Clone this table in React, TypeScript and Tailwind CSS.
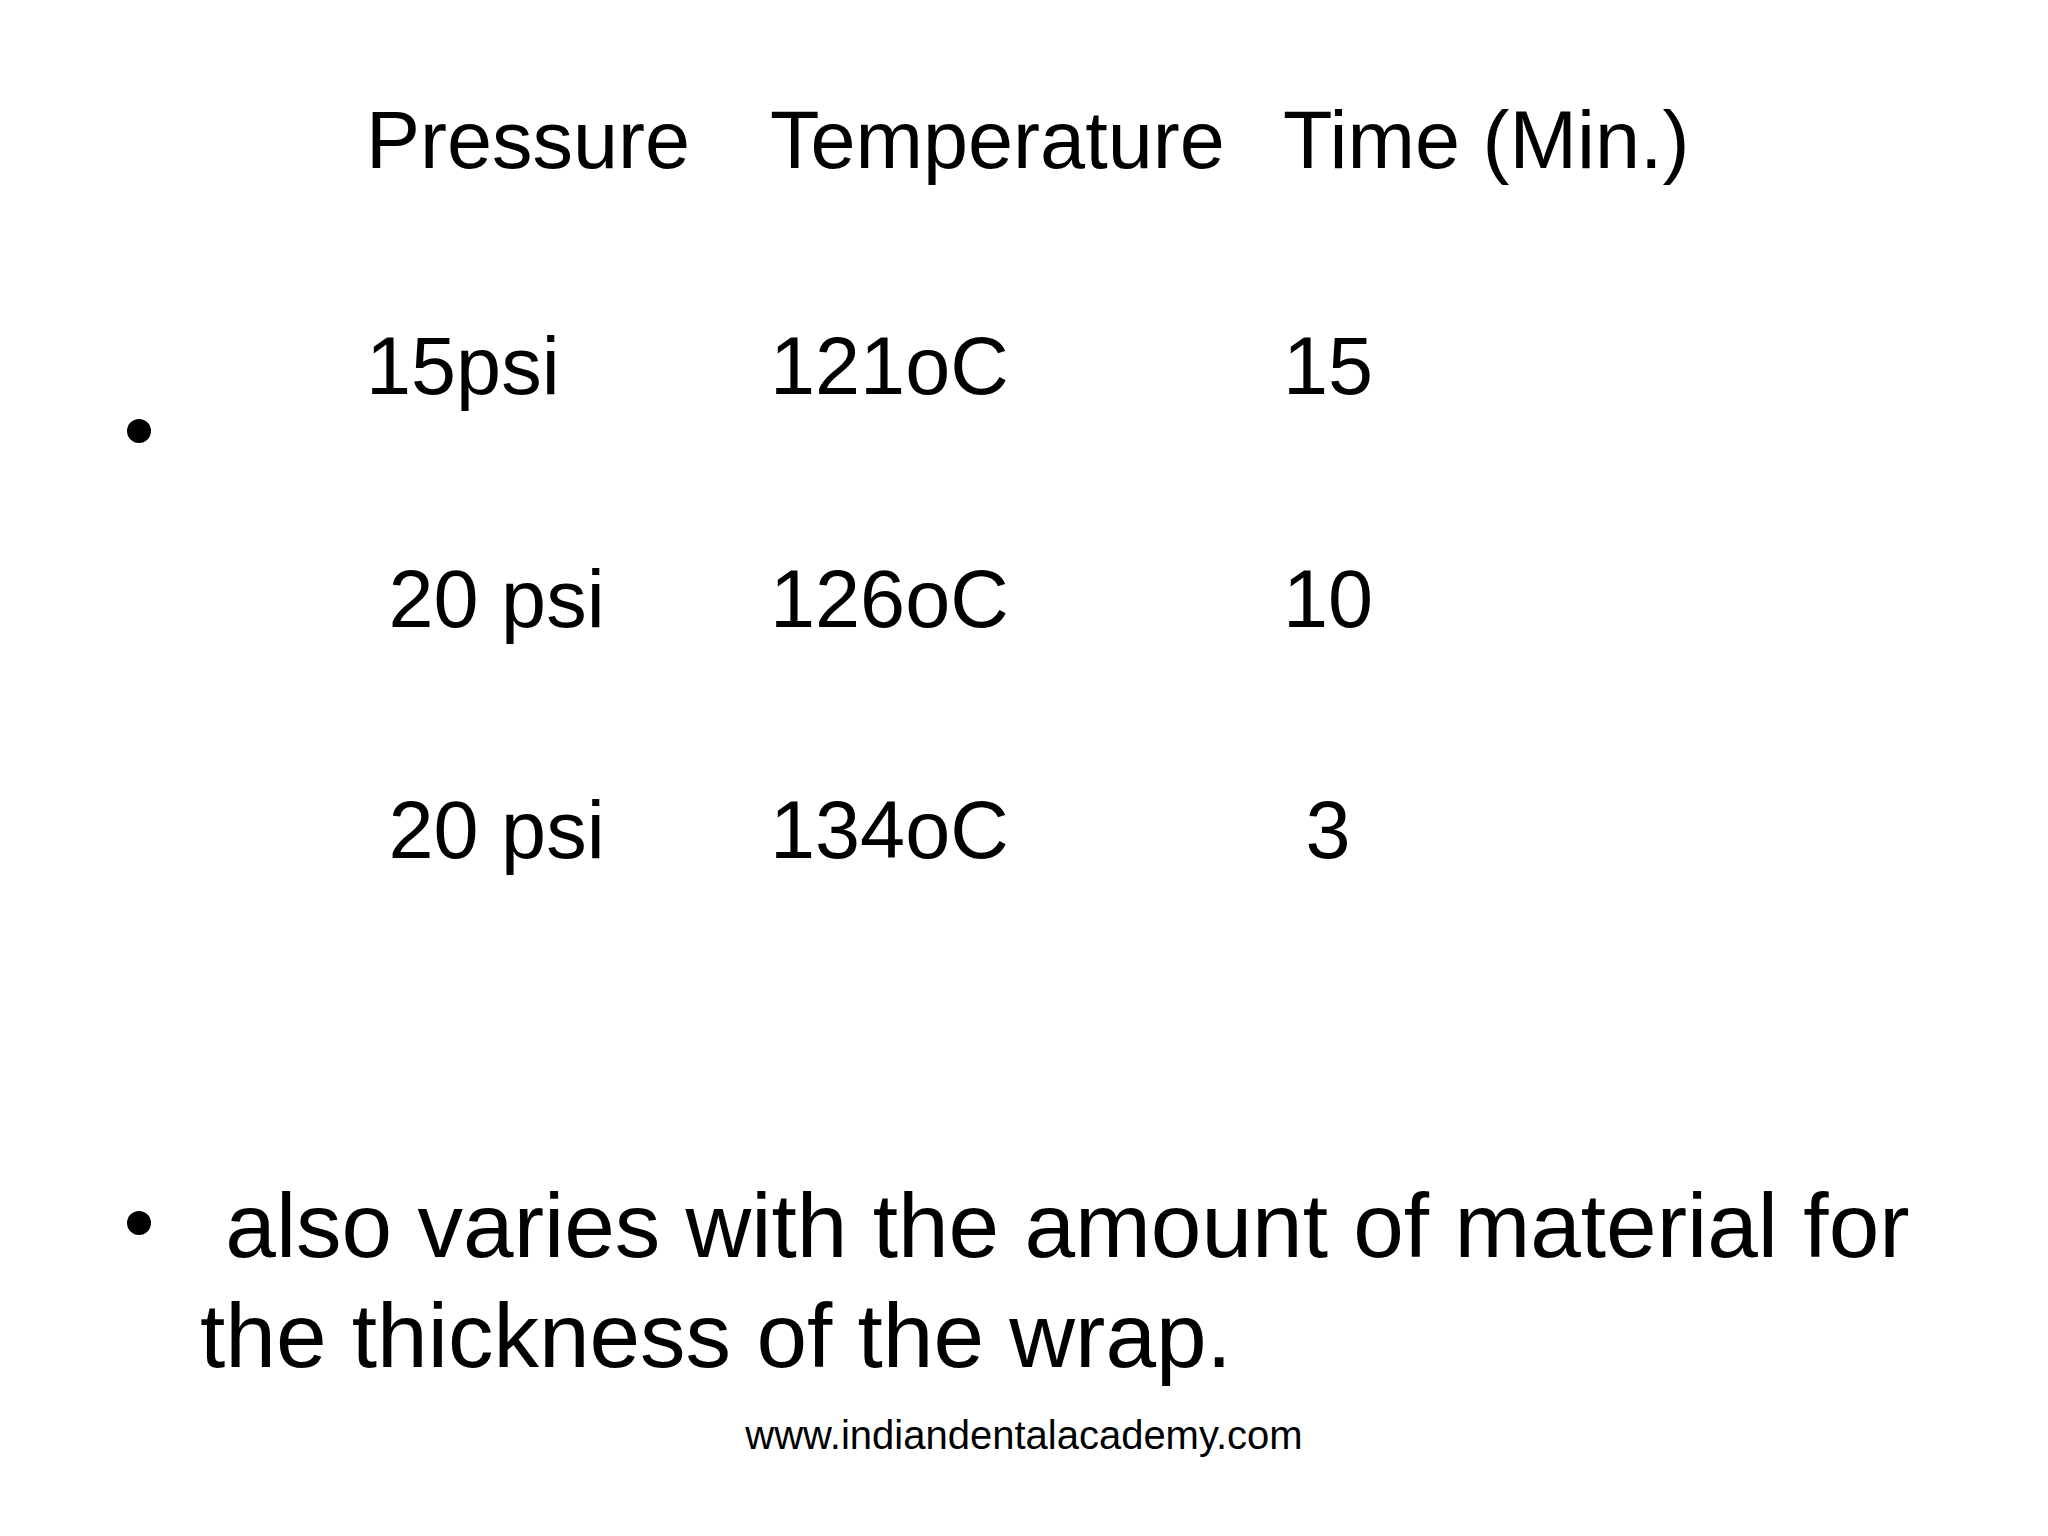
import React from "react";

const rows = [
  { p: "15psi", t: "121oC", m: "15", mt: "mt-[134px]" },
  { p: " 20 psi", t: "126oC", m: "10", mt: "mt-[141px]" },
  { p: " 20 psi", t: "134oC", m: " 3", mt: "mt-[139px]" },
];

function Row({ p, t, m, mt }: { p: string; t: string; m: string; mt: string }) {
  return (
    <div className={`flex h-[92px] text-[81px] leading-[92px] whitespace-pre ${mt}`}>
      <div className="w-[404px] shrink-0">{p}</div>
      <div className="w-[513px] shrink-0">{t}</div>
      <div>{m}</div>
    </div>
  );
}

export default function App() {
  return (
    <div
      className="w-[2048px] h-[1536px] bg-white text-black overflow-hidden flex flex-col pt-[94px]"
      style={{ fontFamily: '"Liberation Sans", Arial, sans-serif' }}
    >
      {/* first bullet with table */}
      <div className="flex items-start pl-[127px]">
        <span className="block w-[24px] h-[24px] rounded-full bg-black mt-[325px] shrink-0" />
        <div className="ml-[215px] flex flex-col">
          <div className="flex h-[92px] text-[81px] leading-[92px] whitespace-pre">
            <div className="w-[404px] shrink-0">Pressure</div>
            <div className="w-[513px] shrink-0">Temperature</div>
            <div>Time (Min.)</div>
          </div>
          {rows.map((r, i) => (
            <Row key={i} {...r} />
          ))}
        </div>
      </div>

      {/* second bullet */}
      <div className="flex items-start pl-[127px] mt-[295px]">
        <span className="block w-[24px] h-[24px] rounded-full bg-black mt-[40px] shrink-0" />
        <p className="ml-[49px] w-[1780px] text-[91px] leading-[110px] whitespace-pre-wrap">
          {" also varies with the amount of material for"}
          <br />
          {"the thickness of the wrap."}
        </p>
      </div>

      {/* footer */}
      <div className="mt-[21px] text-center text-[40px] leading-[46px]">
        www.indiandentalacademy.com
      </div>
    </div>
  );
}
